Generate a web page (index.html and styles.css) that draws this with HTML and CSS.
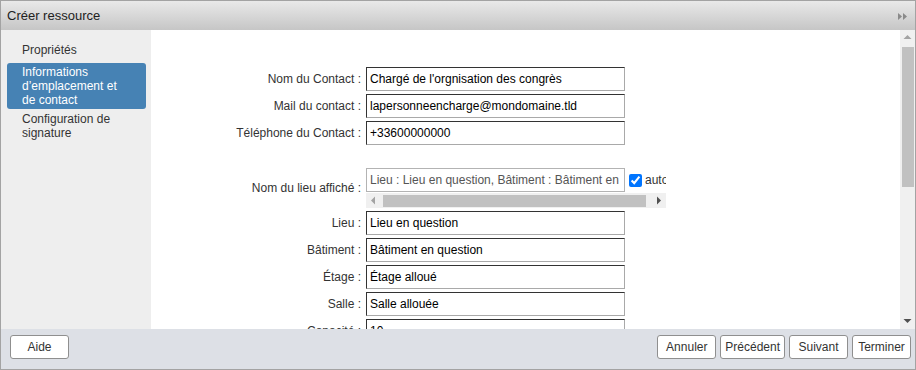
FILE: index.html
```html
<!DOCTYPE html>
<html lang="fr">
<head>
<meta charset="utf-8">
<title>Créer ressource</title>
<link rel="stylesheet" href="styles.css">
</head>
<body>
<div class="dialog">
  <header class="titlebar">
    <span class="title">Créer ressource</span>
    <svg class="collapse" width="10" height="7" viewBox="0 0 10 7"><path d="M0 0L4 3.5L0 7Z M5 0L9 3.5L5 7Z" fill="#8a8a8a"/></svg>
  </header>
  <div class="body">
    <nav class="sidebar">
      <div class="nav-item first">Propriétés</div>
      <div class="nav-item active">Informations d’emplacement et de contact</div>
      <div class="nav-item">Configuration de signature</div>
    </nav>
    <main class="content">
      <form class="form">
        <label class="lbl">Nom du Contact :</label>
        <input class="field" type="text" value="Chargé de l'orgnisation des congrès">
        <label class="lbl">Mail du contact :</label>
        <input class="field" type="text" value="lapersonneencharge@mondomaine.tld">
        <label class="lbl">Téléphone du Contact :</label>
        <input class="field" type="text" value="+33600000000">
        <div class="spacer"></div>
        <label class="lbl">Nom du lieu affiché :</label>
        <div class="display-wrap">
          <div class="display-row">
            <input class="field readonly" type="text" value="Lieu : Lieu en question, Bâtiment : Bâtiment en question, Étage : Étage alloué, Salle : Salle allouée" readonly>
            <input class="check" type="checkbox" checked>
            <span class="auto">automatique</span>
          </div>
          <div class="hscroll">
            <svg class="arrow" width="15" height="15" viewBox="0 0 15 15"><path d="M5 7.5L9 3.5V11.5Z" fill="#a3a3a3"/></svg>
            <div class="hthumb"></div>
            <svg class="arrow" width="15" height="15" viewBox="0 0 15 15"><path d="M10 7.5L6 3.5V11.5Z" fill="#505050"/></svg>
          </div>
        </div>
        <label class="lbl">Lieu :</label>
        <input class="field" type="text" value="Lieu en question">
        <label class="lbl">Bâtiment :</label>
        <input class="field" type="text" value="Bâtiment en question">
        <label class="lbl">Étage :</label>
        <input class="field" type="text" value="Étage alloué">
        <label class="lbl">Salle :</label>
        <input class="field" type="text" value="Salle allouée">
        <label class="lbl">Capacité :</label>
        <input class="field" type="text" value="10">
      </form>
    </main>
    <div class="vscroll">
      <svg class="arrow" width="15" height="15" viewBox="0 0 15 15"><path d="M7.5 5L11.5 9H3.5Z" fill="#a3a3a3"/></svg>
      <div class="vthumb"></div>
      <svg class="arrow down" width="15" height="15" viewBox="0 0 15 15"><path d="M7.5 10L11.5 6H3.5Z" fill="#505050"/></svg>
    </div>
  </div>
  <footer class="footer">
    <button class="btn" type="button">Aide</button>
    <div class="actions">
      <button class="btn" type="button">Annuler</button>
      <button class="btn" type="button">Précédent</button>
      <button class="btn" type="button">Suivant</button>
      <button class="btn" type="button">Terminer</button>
    </div>
  </footer>
</div>
</body>
</html>
```
FILE: styles.css
```css
* { box-sizing: border-box; }

html, body {
  margin: 0;
  padding: 0;
  background: #ffffff;
}

body {
  font-family: "Liberation Sans", Arial, sans-serif;
  font-size: 12px;
  color: #333333;
}

.dialog {
  width: 916px;
  height: 370px;
  border: 1px solid #a3a3a3;
  display: flex;
  flex-direction: column;
  overflow: hidden;
}

.titlebar {
  height: 29px;
  flex: 0 0 29px;
  background: linear-gradient(#e9e9e9, #c6c6c6);
  display: flex;
  align-items: center;
  justify-content: space-between;
  padding: 0 7px 0 6px;
}

.title {
  font-size: 13px;
  color: #222222;
  padding-bottom: 1px;
}

.collapse {
  display: block;
  margin-top: 2px;
}

.body {
  flex: 0 0 299px;
  height: 299px;
  display: flex;
}

.sidebar {
  width: 150px;
  flex: 0 0 150px;
  background: #eeeeee;
  padding: 11px 5px 0 6px;
  display: flex;
  flex-direction: column;
  gap: 1px;
}

.nav-item {
  padding: 2px 19px 2px 15px;
  line-height: 14px;
  color: #333333;
  border-radius: 3px;
}

.nav-item.first {
  margin-bottom: 3px;
}

.nav-item.active {
  background: #4682b4;
  color: #ffffff;
}

.content {
  flex: 1 1 auto;
  background: #ffffff;
  overflow: hidden;
  padding-top: 37px;
}

.form {
  display: grid;
  grid-template-columns: 210px 300px;
  column-gap: 5px;
  row-gap: 3px;
  align-items: center;
}

.lbl {
  text-align: right;
  color: #333333;
  white-space: nowrap;
}

.field {
  width: 259px;
  height: 24px;
  margin: 0;
  padding: 0 3px;
  font-family: "Liberation Sans", Arial, sans-serif;
  font-size: 12px;
  color: #000000;
  background: #ffffff;
  border: 1px solid;
  border-color: #333333 #a9a9a9 #a9a9a9 #333333;
  border-radius: 0;
  outline: none;
}

.field.readonly {
  color: #555555;
  border-color: #b3b3b3;
}

.spacer {
  grid-column: 1 / span 2;
  height: 17px;
}

.display-wrap {
  width: 300px;
  overflow: hidden;
}

.display-row {
  display: flex;
  align-items: center;
  white-space: nowrap;
  height: 24px;
}

.display-row .field {
  flex: 0 0 259px;
}

.check {
  width: 13px;
  height: 13px;
  margin: 0 3px 0 4px;
  flex: 0 0 13px;
}

.auto {
  color: #333333;
}

.hscroll {
  margin-top: 1px;
  height: 15px;
  background: #f0f0f0;
  display: flex;
  align-items: center;
}

.arrow {
  display: block;
  flex: 0 0 15px;
}

.hthumb {
  height: 12px;
  width: 263px;
  margin-left: 2px;
  margin-right: 5px;
  background: #c1c1c1;
}

.vscroll {
  width: 15px;
  flex: 0 0 15px;
  background: #f0f0f0;
  display: flex;
  flex-direction: column;
  align-items: center;
}

.vthumb {
  width: 12px;
  height: 140px;
  margin-top: 2px;
  margin-left: 1px;
  background: #c1c1c1;
}

.arrow.down {
  margin-top: auto;
  margin-bottom: 1px;
}

.footer {
  flex: 0 0 40px;
  height: 40px;
  background: #dde0e6;
  display: flex;
  justify-content: space-between;
  align-items: flex-start;
  padding: 6px 4px 0 9px;
}

.actions {
  display: flex;
  gap: 4px;
}

.btn {
  height: 24px;
  min-width: 59px;
  padding: 0 4px;
  margin: 0;
  font-family: "Liberation Sans", Arial, sans-serif;
  font-size: 12px;
  color: #333333;
  background: #ffffff;
  border: 1px solid #8f8f8f;
  border-radius: 3px;
}
```
